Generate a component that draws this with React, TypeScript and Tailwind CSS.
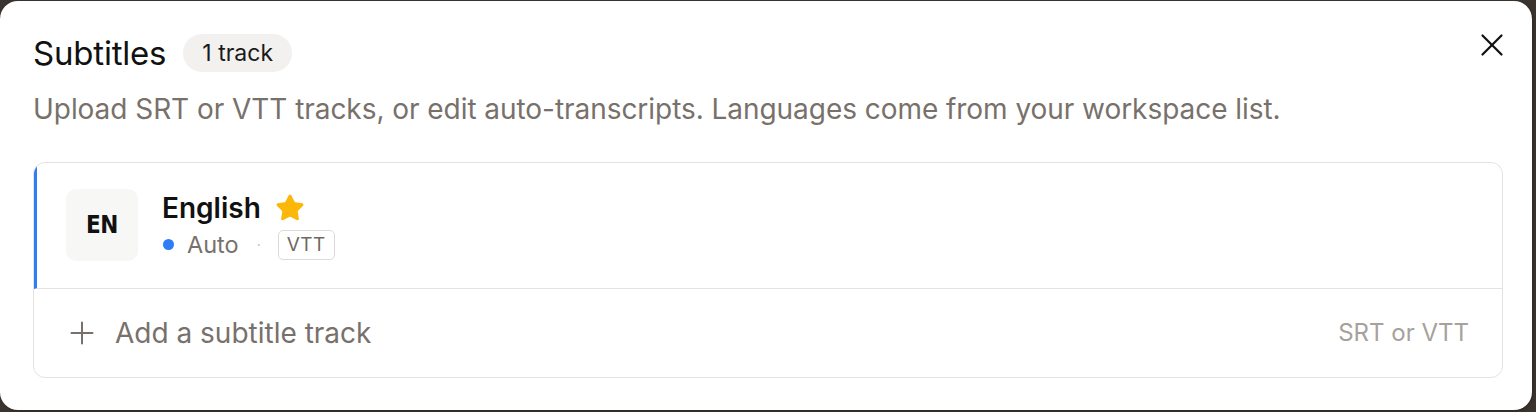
import React from 'react';
import { X, Star } from 'lucide-react';

const App: React.FC = () => {
  return (
    <div className="h-[412px] w-full bg-[#3b332e] overflow-hidden" style={{ fontFamily: 'Inter, "Noto Sans", sans-serif' }}>
      <div className="mt-px h-[409px] w-[1532px] bg-white rounded-[18px] shadow-[1px_1px_3px_rgba(0,0,0,0.25)] px-[33px] pt-[33px] pb-[32px] flex flex-col">
        <div className="flex items-center h-[39px]">
          <h2 className="text-[33px] leading-none text-[#111] font-normal tracking-[-0.2px]">Subtitles</h2>
          <span className="ml-[17px] h-[38px] px-[19px] rounded-full bg-[#f2f1ef] text-[23px] text-[#1a1a1a] flex items-center">1 track</span>
          <button className="ml-auto mr-[-12px] mt-[-17px] text-[#111]">
            <X className="w-[38px] h-[38px]" strokeWidth={1.4} />
          </button>
        </div>

        <p className="mt-[19px] text-[28px] leading-[34px] text-[#78716b] tracking-[-0.05px]">
          Upload SRT or VTT tracks, or edit auto-transcripts. Languages come from your workspace list.
        </p>

        <div className="mt-[36px] w-[1470px] border border-[#e4e3e1] rounded-[12px] overflow-hidden">
          <div className="h-[126px] flex items-center border-l-[3px] border-[#2f7cf6] border-b border-b-[#e4e3e1] pl-[29px]">
            <div className="w-[72px] h-[72px] rounded-[10px] bg-[#f7f7f5] flex items-center justify-center text-[24px] font-bold text-[#111] tracking-[-0.5px]">
              <span style={{ fontFamily: '"DejaVu Sans Condensed", "DejaVu Sans", sans-serif' }}>EN</span>
            </div>
            <div className="ml-[24px] flex flex-col mt-[2px]">
              <div className="flex items-center">
                <span className="text-[28px] font-semibold text-[#111] leading-[36px]">English</span>
                <Star className="ml-[14px] w-[30px] h-[30px] text-[#fbb80a]" fill="#fbb80a" strokeWidth={1.5} />
              </div>
              <div className="mt-[1px] flex items-center">
                <span className="w-[11px] h-[11px] rounded-full bg-[#2f7cf6] ml-[1px]" />
                <span className="ml-[13px] text-[23.5px] text-[#78716b]">Auto</span>
                <span className="ml-[18px] text-[14px] text-[#bbb6b1]">·</span>
                <span className="ml-[17px] h-[30px] px-[8px] rounded-[5px] border border-[#dddbd8] text-[19px] text-[#6f6964] flex items-center tracking-[0.5px]">VTT</span>
              </div>
            </div>
          </div>
          <div className="h-[89px] flex items-center pl-[36px] pr-[33px]">
            <svg width="24" height="24" viewBox="0 0 24 24" className="text-[#78716b]" fill="none" stroke="currentColor" strokeWidth="2" strokeLinecap="round">
              <path d="M12 1.5v21M1.5 12h21" />
            </svg>
            <span className="ml-[21px] text-[28px] text-[#78716b]">Add a subtitle track</span>
            <span className="ml-auto text-[24px] text-[#a7a19c]">SRT or VTT</span>
          </div>
        </div>
      </div>
    </div>
  );
};

export default App;
